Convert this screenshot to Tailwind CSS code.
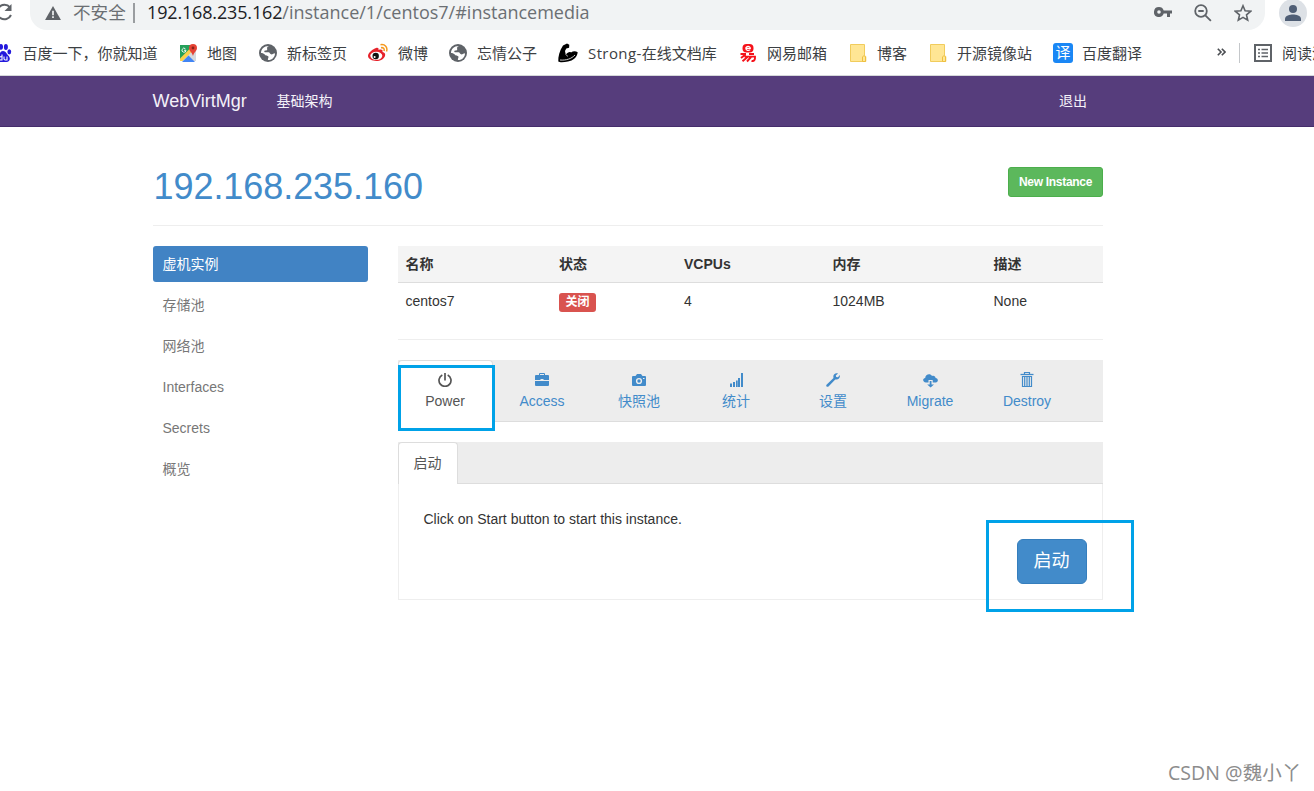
<!DOCTYPE html>
<html lang="zh-CN">
<head>
    <meta charset="UTF-8">
    <meta name="viewport" content="width=device-width, initial-scale=1.0">
    <title>WebVirtMgr - centos7</title>
    <script src="https://cdn.jsdelivr.net/npm/@tailwindcss/browser@4"></script>
</head>
<body class="relative h-[791px] overflow-hidden bg-white font-['Liberation_Sans','Noto_Sans_CJK_SC',sans-serif] text-sm leading-5 text-[#333]">

    <!-- Browser toolbar -->
    <div class="flex h-[30px] overflow-hidden font-['Open_Sans','Noto_Sans_CJK_SC',sans-serif]">
        <div class="w-[30px] shrink-0">
            <svg class="-ml-[6px] mt-[2px]" width="20" height="20" viewBox="0 0 20 20" fill="none" stroke="#5f6368" stroke-width="2">
                <path d="M16 5.5A7.2 7.2 0 1 0 17 13"/>
                <path d="M17.5 2v7h-7z" fill="#5f6368" stroke="none"/>
            </svg>
        </div>
        <div class="-mt-[5px] flex h-[35px] w-[1235px] shrink-0 items-center rounded-b-[17px] bg-[#f1f3f4] pl-[15px]">
            <svg class="mt-px" width="16" height="14" viewBox="0 0 17 15">
                <path d="M8.5 0L17 15H0z" fill="#5f6368"/>
                <path d="M7.6 5.2h1.8v4.6H7.6zM7.6 11h1.8v1.9H7.6z" fill="#f1f3f4"/>
            </svg>
            <span class="-mt-[2px] ml-[12px] w-[53px] text-[17.6px] whitespace-nowrap text-[#6b6f73]">不安全</span>
            <span class="ml-[7px] h-5 w-[2px] bg-[#9a9da0]"></span>
            <span class="-mt-[2px] ml-[12px] text-[18px] whitespace-nowrap text-[#6b6f73]"><span class="tracking-[-0.16px] text-[#202124]">192.168.235.162</span>/instance/1/centos7/#instancemedia</span>
            <svg class="-mt-px mr-[22px] ml-auto" width="18" height="12" viewBox="0 0 18 12">
                <path d="M5 1a5 5 0 1 0 4.7 6.600H13V11h3V7.600h2V4.400H9.700A5 5 0 0 0 5 1zm0 3.200a1.800 1.800 0 1 1 0 3.600 1.800 1.800 0 0 1 0-3.600z" fill="#5f6368"/>
            </svg>
            <svg class="mt-px mr-[22px]" width="18" height="18" viewBox="0 0 18 18" fill="none" stroke="#5f6368" stroke-width="1.800">
                <circle cx="7" cy="7" r="5.800"/>
                <path d="M4.300 7h5.400M11.300 11.300l5.600 5.600"/>
            </svg>
            <svg class="mt-px mr-[13px]" width="18" height="18" viewBox="0 0 18 18" fill="none" stroke="#5f6368" stroke-width="1.600">
                <path d="M9 1.800l2.100 5 5.500.5-4.100 3.600 1.200 5.300L9 13.400l-4.700 2.800 1.200-5.300-4.100-3.600 5.500-.5z"/>
            </svg>
        </div>
        <svg class="-mt-px ml-[14px] shrink-0" width="28" height="28" viewBox="0 0 28 28">
            <circle cx="14" cy="14" r="14" fill="#dde1e6"/>
            <circle cx="14" cy="10" r="4" fill="#4f5e75"/>
            <path d="M6 22v-2.200c0-3 5-4.300 8-4.300s8 1.300 8 4.300V22z" fill="#4f5e75"/>
        </svg>
    </div>

    <!-- Bookmarks bar -->
    <div class="flex h-[46px] items-center overflow-hidden border-b border-[#d5d8da] font-['Open_Sans','Noto_Sans_CJK_SC',sans-serif] text-[15px] whitespace-nowrap text-[#3c4043]">
        <div class="-ml-[7px] flex w-[185px] shrink-0 items-center gap-[9.500px]">
            <svg width="20" height="20" viewBox="0 0 20 20" fill="#2319dc">
                <ellipse cx="3.500" cy="8.500" rx="2" ry="2.700"/>
                <ellipse cx="8" cy="3.800" rx="2" ry="2.900"/>
                <ellipse cx="12.900" cy="4" rx="2" ry="2.900"/>
                <ellipse cx="16.300" cy="8.800" rx="1.900" ry="2.600"/>
                <path d="M10 8c3 0 3.500 3 5.500 4.800 2.500 2.400 1.200 6.200-2 6.200H7c-3.500 0-4.500-4-2-6.300C7 11 7.200 8 10 8z"/>
                <path d="M9 11.500V17H7.500a1.700 1.700 0 0 1 0-3.300H9M11 13.500v2.300q0 1.200 1.200 1.200H14v-3.500" fill="none" stroke="#fff" stroke-width="1.100"/>
            </svg>
            <span>百度一下，你就知道</span>
        </div>
        <div class="flex w-[80px] shrink-0 items-center gap-[9px]">
            <svg width="20" height="20" viewBox="0 0 20 20">
                <path d="M2 2h14L2 18z" fill="#25a05a"/>
                <path d="M2 18L15 5l3 3v10z" fill="#d6d9dc"/>
                <path d="M2 15.500L13.500 4l2.500 2.500L4.500 18H2z" fill="#fbd04b"/>
                <path d="M4 19l6.500-6.500L17 19z" fill="#4285f4"/>
                <path d="M15 1a4 4 0 0 1 4 4c0 3-3 4-4 8-1-4-4-5-4-8a4 4 0 0 1 4-4z" fill="#e54335"/>
                <circle cx="15" cy="5" r="1.400" fill="#8c2218"/>
                <path d="M7.400 5.800A2 2 0 1 0 8 7.300H6" fill="none" stroke="#fff" stroke-width=".9"/>
            </svg>
            <span>地图</span>
        </div>
        <div class="flex w-[110px] shrink-0 items-center gap-[9px]">
            <svg width="20" height="20" viewBox="0 0 20 20">
                <circle cx="10" cy="10" r="9" fill="#5f6368"/>
                <path d="M11 3c-1.800.8-2.200 1.500-1.800 3 .3 1-.7 1.500-2 1.500C6 7.500 6 9 7 9.300h3.500c1.500 0 1.200 1.700 2.500 2 1.300.4 2.500-.8 4-1 0 4-3 7-7 6.800-.5-1.200.5-1.800.5-3C10.500 12.500 8 13 7 11.800 6 10.600 4.500 10 3 10 3 6 6.500 2.700 11 3z" fill="#fff"/>
            </svg>
            <span>新标签页</span>
        </div>
        <div class="flex w-[80px] shrink-0 items-center gap-[10px]">
            <svg width="20" height="20" viewBox="0 0 20 20">
                <path d="M8 5c1.800-.8 3 .1 2.500 2 2.300-1 4.800-.5 4 2 2 .5 3.200 1.600 2.500 4-1 3-4.700 5-8.700 5S0 16 0 12.800C0 9.800 5 6 8 5z" fill="#e6222b"/>
                <ellipse cx="8.300" cy="12.800" rx="6" ry="4" fill="#fff"/>
                <circle cx="7.700" cy="13" r="3.200" fill="#111"/>
                <circle cx="6.600" cy="14" r="1" fill="#fff"/>
                <path d="M12.500 1.700c4.500-.8 7.500 2.500 6 6.900M13 4.700c2.300-.4 3.700 1 3 3.200" fill="none" stroke="#f5981d" stroke-width="1.500"/>
            </svg>
            <span>微博</span>
        </div>
        <div class="flex w-[110px] shrink-0 items-center gap-[9px]">
            <svg width="20" height="20" viewBox="0 0 20 20">
                <circle cx="10" cy="10" r="9" fill="#5f6368"/>
                <path d="M11 3c-1.800.8-2.200 1.500-1.800 3 .3 1-.7 1.500-2 1.500C6 7.500 6 9 7 9.300h3.500c1.500 0 1.200 1.700 2.500 2 1.300.4 2.500-.8 4-1 0 4-3 7-7 6.800-.5-1.200.5-1.800.5-3C10.500 12.500 8 13 7 11.800 6 10.600 4.500 10 3 10 3 6 6.500 2.700 11 3z" fill="#fff"/>
            </svg>
            <span>忘情公子</span>
        </div>
        <div class="flex w-[180px] shrink-0 items-center gap-[10px]">
            <svg width="20" height="20" viewBox="0 0 20 20">
                <path d="M5 2.500L9 .5l2.300 1.200-.2 3-2.800.8-1.300 2.500.8 4C9.500 9 12 8.500 13 9.500c2-1.500 4.500-1.500 6.700-.3-.5 5-4.700 8.300-9.700 9.300-4 .8-8 1.200-9.700 0C0 14 1.500 7.500 5 2.500z" fill="#000"/>
                <path d="M2 17c6 .6 11.500-1.200 15-5" fill="none" stroke="#fff" stroke-width=".8"/>
                <path d="M8 11.500c.3 1 1 1.600 2 1.800" fill="none" stroke="#fff" stroke-width=".6"/>
            </svg>
            <span><span class="tracking-[0.400px]">Strong-</span>在线文档库</span>
        </div>
        <div class="flex w-[110px] shrink-0 items-center gap-[9px]">
            <svg width="20" height="20" viewBox="0 0 20 20" fill="none" stroke="#f5121a" stroke-width="1.900">
                <rect x="4.500" y="1" width="11" height="8.500" rx="4" fill="#f5121a" stroke="none"/>
                <path d="M7.800 5.300h4.500c0-2.500-4.500-2.500-4.500 0s3 2.500 4.500 1.300" stroke="#fff" stroke-width="1.200"/>
                <path d="M2.500 11H8M11 11h5M7.500 11.500L3 15M6.500 13.600H17c.3 3-.8 5-3.500 4.200M9.500 14L4.500 18.300M13 14L9 18.500"/>
            </svg>
            <span>网易邮箱</span>
        </div>
        <div class="flex w-[80px] shrink-0 items-center gap-[9px]">
            <svg width="20" height="20" viewBox="0 0 20 20">
                <path d="M2.500 1.500h14v11l1.300 1v5H2.500z" fill="#ffe694" stroke="#f1cc5c"/>
                <path d="M14.500 18v-4l1.500-1.500 1.500 1.500v4.500h-3z" fill="#ffe694" stroke="#eebf3f"/>
            </svg>
            <span>博客</span>
        </div>
        <div class="flex w-[125px] shrink-0 items-center gap-[9px]">
            <svg width="20" height="20" viewBox="0 0 20 20">
                <path d="M2.500 1.500h14v11l1.300 1v5H2.500z" fill="#ffe694" stroke="#f1cc5c"/>
                <path d="M14.500 18v-4l1.500-1.500 1.500 1.500v4.500h-3z" fill="#ffe694" stroke="#eebf3f"/>
            </svg>
            <span>开源镜像站</span>
        </div>
        <div class="flex shrink-0 items-center gap-[9px]">
            <span class="flex size-5 items-center justify-center rounded-[3px] bg-[#1a87f5] text-[15px] leading-none text-white">译</span>
            <span>百度翻译</span>
        </div>
        <svg class="-mt-[2px] ml-[75px] shrink-0" width="9" height="8" viewBox="0 0 9 8" fill="none" stroke="#4a4d51" stroke-width="1.600">
            <path d="M.8.800L4 4 .8 7.200M4.800.800L8 4 4.800 7.200"/>
        </svg>
        <span class="ml-[13px] h-5 w-px shrink-0 bg-[#c4c7ca]"></span>
        <svg class="ml-[14px] shrink-0" width="18" height="18" viewBox="0 0 18 18" fill="none" stroke="#5f6368">
            <rect x="1" y="1" width="16" height="16" stroke-width="2"/>
            <path d="M4 5.500h2M4 9h2M4 12.500h2M7.500 5.500H14M7.500 9H14M7.500 12.500H14" stroke-width="1.600"/>
        </svg>
        <span class="ml-[10px]">阅读清单</span>
    </div>

    <!-- Navbar -->
    <nav class="flex h-[51px] items-center border-b border-[#452d6b] bg-[#563d7c] pl-[152.500px] text-[#f4f1f8]">
        <a href="#" class="w-[124px] text-lg">WebVirtMgr</a>
        <a href="#" class="w-[782.500px]">基础架构</a>
        <a href="#">退出</a>
    </nav>

    <main class="ml-[153px] w-[950px]">
        <!-- Page header -->
        <header class="flex h-[99px] items-start justify-between border-b border-[#eee] pt-10">
            <h1 class="pl-[0.500px] text-[36px] leading-[40px] tracking-[-0.060px] text-[#428bca]">192.168.235.160</h1>
            <button class="h-[30px] w-[95px] rounded-[3px] border border-[#4cae4c] bg-[#5cb85c] text-xs font-bold tracking-[-0.300px] text-white">New Instance</button>
        </header>

        <div class="mt-5 flex gap-[30px]">
            <!-- Sidebar -->
            <ul class="flex w-[215px] shrink-0 flex-col gap-[5px] text-[#777]">
                <li class="flex h-9 items-center rounded-[3px] bg-[#4183c4] px-[9.500px] text-white">虚机实例</li>
                <li class="flex h-9 items-center px-[9.500px]">存储池</li>
                <li class="flex h-9 items-center px-[9.500px]">网络池</li>
                <li class="flex h-9 items-center px-[9.500px]">Interfaces</li>
                <li class="flex h-9 items-center px-[9.500px]">Secrets</li>
                <li class="flex h-9 items-center px-[9.500px]">概览</li>
            </ul>

            <div class="w-[705px]">
                <!-- Instance table -->
                <table class="w-full table-fixed border-separate border-spacing-0 text-left">
                    <thead>
                        <tr class="bg-[#f4f4f4]">
                            <th class="h-[37px] w-[153px] border-b border-[#ddd] p-0 pl-[7.500px]">名称</th>
                            <th class="w-[125px] border-b border-[#ddd] p-0 pl-2">状态</th>
                            <th class="w-[149px] border-b border-[#ddd] p-0 pl-2">VCPUs</th>
                            <th class="w-[160px] border-b border-[#ddd] p-0 pl-[7.500px]">内存</th>
                            <th class="border-b border-[#ddd] p-0 pl-[8.500px]">描述</th>
                        </tr>
                    </thead>
                    <tbody>
                        <tr class="h-9">
                            <td class="pl-[7.500px]">centos7</td>
                            <td class="pl-2"><span class="relative top-px flex h-[19px] w-[37px] items-center justify-center rounded-[3px] bg-[#d9534f] text-xs font-bold text-white">关闭</span></td>
                            <td class="pl-2">4</td>
                            <td class="pl-[7.500px]">1024MB</td>
                            <td class="pl-[8.500px]">None</td>
                        </tr>
                    </tbody>
                </table>
                <hr class="mt-5 border-[#eee]">

                <!-- Instance actions -->
                <ul class="mt-5 flex h-[62px] gap-[2px] border-b border-[#ddd] bg-[#ededed] text-center text-[#428bca]">
                    <li class="relative -mb-px flex w-[95px] flex-col items-center rounded-t-[4px] border border-b-0 border-[#ddd] bg-white pt-3 pr-px text-[#555]">
                        <svg width="14" height="14" viewBox="0 0 14 14" fill="none" stroke="#555" stroke-width="1.700">
                            <path d="M4.300 2A6 6 0 1 0 9.700 2M7 0v7.500"/>
                        </svg>
                        <span class="mt-[4px]">Power</span>
                        <span class="absolute top-1 -left-px h-[66px] w-[97px] border-[3px] border-[#00a2e8]"></span>
                    </li>
                    <li class="flex w-[95px] flex-col items-center pt-[13px] pr-px">
                        <svg width="14" height="14" viewBox="0 0 14 14" fill="#428bca">
                            <path d="M4 2V1q0-1 1-1h4q1 0 1 1v1h3q1 0 1 1v4H8.500V6h-3v1H0V3q0-1 1-1zM5 2h4V1H5zM0 8h14v4q0 1-1 1H1q-1 0-1-1z"/>
                        </svg>
                        <span class="mt-[4px]">Access</span>
                    </li>
                    <li class="flex w-[95px] flex-col items-center pt-[13px] pr-px">
                        <svg width="14" height="14" viewBox="0 0 14 14">
                            <path d="M5 1h4l1.500 2H13q1 0 1 1v8q0 1-1 1H1q-1 0-1-1V4q0-1 1-1h2.500z" fill="#428bca"/>
                            <circle cx="7" cy="8" r="2.400" fill="none" stroke="#ededed" stroke-width="1.400"/>
                            <path d="M11 5h1.500v1H11z" fill="#ededed"/>
                        </svg>
                        <span class="mt-[4px]">快照池</span>
                    </li>
                    <li class="flex w-[95px] flex-col items-center pt-[13px] pr-px">
                        <svg width="14" height="14" viewBox="0 0 14 14" fill="#428bca">
                            <path d="M1 10.500h2V14H1zM4 9h2v5H4zM7 7.500h1.700V14H7zM9 5h2v9H9zM12 0h2v14h-2z"/>
                        </svg>
                        <span class="mt-[4px]">统计</span>
                    </li>
                    <li class="flex w-[95px] flex-col items-center pt-[13px] pr-px">
                        <svg width="14" height="14" viewBox="0 0 14 14" fill="#428bca">
                            <path d="M12 .5L9.800 2.500l.4 1.600 1.700.2L13.900 2c.5 3-1.800 5.200-4.600 4.400L2.500 13.400c-1.300 1.200-3-.4-2-1.700L7.500 5C6.600 2 9 -.5 12 .5z"/>
                        </svg>
                        <span class="mt-[4px]">设置</span>
                    </li>
                    <li class="flex w-[95px] flex-col items-center pt-[13px] pr-px">
                        <svg width="15" height="15" viewBox="0 0 15 15" fill="#428bca">
                            <path d="M3 9.500C-.8 9.200-.5 5.200 2.200 5 2.200 1 7.500-.3 9 3c2-.8 3.600.5 3.500 2 3 0 3.200 4.300.2 4.500H9.700V7H5.500v2.500z"/>
                            <path d="M6.700 8h1.800v3.500H11l-3.400 3-3.400-3h2.500z"/>
                        </svg>
                        <span class="mt-[3px]">Migrate</span>
                    </li>
                    <li class="flex w-[95px] flex-col items-center pt-[12px] pr-px">
                        <svg width="14" height="15" viewBox="0 0 14 15" fill="none" stroke="#428bca">
                            <path d="M.5 2.500h13" stroke-width="1.300"/>
                            <path d="M4.500 2.500v-2h5v2M2 4.500h10M2.500 4v10.500h9V4M4.700 5v9M7 5v9M9.300 5v9" stroke-width="1.200"/>
                        </svg>
                        <span class="mt-[4px]">Destroy</span>
                    </li>
                </ul>

                <!-- Power panel -->
                <div class="mt-5 flex h-[42px] border-b border-[#ddd] bg-[#ededed]">
                    <div class="-mb-px flex w-[60px] items-center justify-center rounded-t-[4px] border border-b-0 border-[#ddd] bg-white pr-px pb-[2px] text-[#555]">启动</div>
                </div>
                <div class="flex h-[116px] justify-between border border-t-0 border-[#eee] pr-[15px] pl-[24.500px]">
                    <p class="mt-[25px]">Click on Start button to start this instance.</p>
                    <div class="relative mt-[55px] h-[45px] w-[70px]">
                        <button class="h-full w-full rounded-[6px] border border-[#357ebd] bg-[#428bca] pr-px pb-[2px] text-lg text-white">启动</button>
                        <span class="absolute -top-[19px] -left-[31px] h-[92px] w-[148px] border-[3px] border-[#00a2e8]"></span>
                    </div>
                </div>
            </div>
        </div>
    </main>

    <!-- Watermark -->
    <div class="absolute top-[760px] left-[1168px] font-['Open_Sans','Noto_Sans_CJK_SC',sans-serif] text-[19.500px] leading-[25px] tracking-[0.050px] whitespace-nowrap text-[#8c8c8c]">CSDN @魏小丫</div>
</body>
</html>
